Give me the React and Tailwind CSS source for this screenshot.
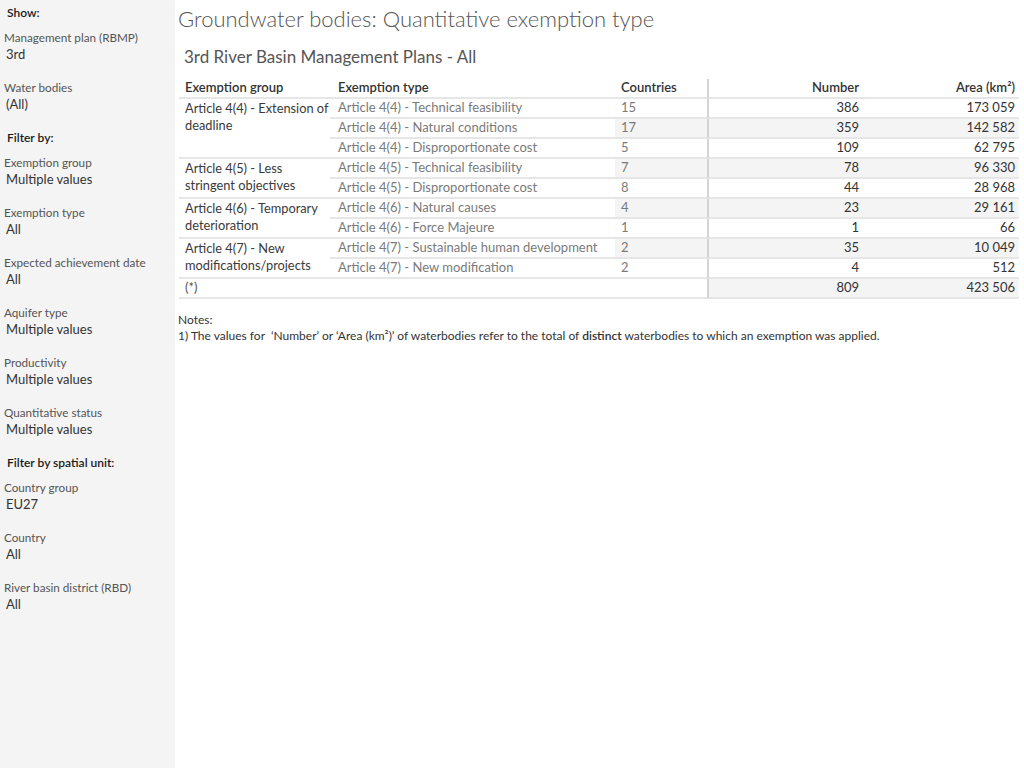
import React from "react";

const font = { fontFamily: "Lato, 'Open Sans', sans-serif" };

function SideHeader({ children }) {
  return (
    <div className="h-[25px] flex items-center pl-[7px] text-[12px] font-semibold text-[#1a1a1a]">{children}</div>
  );
}

function Filter({ label, value }) {
  return (
    <div className="h-[50px] pt-[5px]">
      <div className="h-[16px] flex items-center pl-[4px] text-[11.7px] text-[#555]">{label}</div>
      <div className="h-[17px] flex items-center pl-[6px] text-[13px] text-[#333]">{value}</div>
    </div>
  );
}

const rows = [
  { t: "Article 4(4) - Technical feasibility", c: "15", n: "386", a: "173 059" },
  { t: "Article 4(4) - Natural conditions", c: "17", n: "359", a: "142 582" },
  { t: "Article 4(4) - Disproportionate cost", c: "5", n: "109", a: "62 795" },
  { t: "Article 4(5) - Technical feasibility", c: "7", n: "78", a: "96 330" },
  { t: "Article 4(5) - Disproportionate cost", c: "8", n: "44", a: "28 968" },
  { t: "Article 4(6) - Natural causes", c: "4", n: "23", a: "29 161" },
  { t: "Article 4(6) - Force Majeure", c: "1", n: "1", a: "66" },
  { t: "Article 4(7) - Sustainable human development", c: "2", n: "35", a: "10 049" },
  { t: "Article 4(7) - New modification", c: "2", n: "4", a: "512" },
];

const groups = [
  { lines: ["Article 4(4) - Extension of", "deadline"], span: "row-span-3", start: 0 },
  { lines: ["Article 4(5) - Less", "stringent objectives"], span: "row-span-2", start: 3 },
  { lines: ["Article 4(6) - Temporary", "deterioration"], span: "row-span-2", start: 5 },
  { lines: ["Article 4(7) - New", "modifications/projects"], span: "row-span-2", start: 7 },
];

export default function App() {
  const cells = [];
  cells.push(
    <div key="h1" className="pl-[6px] flex items-center border-b-2 border-[#e6e6e6] text-[#333] font-semibold">Exemption group</div>,
    <div key="h2" className="pl-[8px] flex items-center border-b-2 border-[#e6e6e6] text-[#333] font-semibold">Exemption type</div>,
    <div key="h3" className="pl-[6px] flex items-center border-b-2 border-[#e6e6e6] text-[#333] font-semibold">Countries</div>,
    <div key="h4" className="pr-[4px] flex items-center justify-end border-b-2 border-l-2 border-[#e6e6e6] border-l-[#d4d4d4] text-[#333] font-semibold">Number</div>,
    <div key="h5" className="pr-[4px] flex items-center justify-end border-b-2 border-[#e6e6e6] text-[#333] font-semibold">Area (km²)</div>
  );
  rows.forEach((r, i) => {
    const g = groups.find((x) => x.start === i);
    if (g) {
      cells.push(
        <div key={"g" + i} className={`${g.span} pl-[6px] pt-[1px] border-b-2 border-[#e6e6e6] text-[12.8px] text-[#3a3a3a] leading-[17px] whitespace-nowrap`}>
          {g.lines.map((l) => (
            <div key={l}>{l}</div>
          ))}
        </div>
      );
    }
    const band = i % 2 === 1 ? "bg-[#f4f4f4]" : "bg-white";
    cells.push(
      <div key={"t" + i} className="pl-[8px] flex items-center border-b-2 border-[#e6e6e6] text-[#7a7a7a] whitespace-nowrap">{r.t}</div>,
      <div key={"c" + i} className={`${band} pl-[6px] flex items-center border-b-2 border-[#e6e6e6] text-[#7a7a7a]`}>{r.c}</div>,
      <div key={"n" + i} className={`${band} pr-[4px] flex items-center justify-end border-b-2 border-l-2 border-[#e6e6e6] border-l-[#d4d4d4] text-[#333]`}>{r.n}</div>,
      <div key={"a" + i} className={`${band} pr-[4px] flex items-center justify-end border-b-2 border-[#e6e6e6] text-[#333]`}>{r.a}</div>
    );
  });
  cells.push(
    <div key="f1" className="col-span-3 pl-[6px] flex items-center border-b-2 border-[#e6e6e6] text-[#555]">(*)</div>,
    <div key="f2" className="bg-[#f4f4f4] pr-[4px] flex items-center justify-end border-b-2 border-l-2 border-[#e6e6e6] border-l-[#d4d4d4] text-[#333]">809</div>,
    <div key="f3" className="bg-[#f4f4f4] pr-[4px] flex items-center justify-end border-b-2 border-[#e6e6e6] text-[#333]">423 506</div>
  );

  return (
    <div className="flex w-[1024px] h-[768px] bg-white overflow-hidden" style={font}>
      <aside className="w-[175px] shrink-0 bg-[#f4f4f4]">
        <SideHeader>Show:</SideHeader>
        <Filter label="Management plan (RBMP)" value="3rd" />
        <Filter label="Water bodies" value="(All)" />
        <SideHeader>Filter by:</SideHeader>
        <Filter label="Exemption group" value="Multiple values" />
        <Filter label="Exemption type" value="All" />
        <Filter label="Expected achievement date" value="All" />
        <Filter label="Aquifer type" value="Multiple values" />
        <Filter label="Productivity" value="Multiple values" />
        <Filter label="Quantitative status" value="Multiple values" />
        <SideHeader>Filter by spatial unit:</SideHeader>
        <Filter label="Country group" value="EU27" />
        <Filter label="Country" value="All" />
        <Filter label="River basin district (RBD)" value="All" />
      </aside>
      <main className="flex-1 pl-[3px]">
        <h1 className="h-[37px] flex items-center text-[22px] font-light text-[#555]">
          Groundwater bodies: Quantitative exemption type
        </h1>
        <h2 className="h-[39px] pl-[6px] flex items-center text-[17px] text-[#555]">
          3rd River Basin Management Plans - All
        </h2>
        <div className="pl-[1px] mt-[3px]">
          <div className="grid grid-cols-[151px_285px_92px_156px_156px] auto-rows-[20px] text-[13px]">
            {cells}
          </div>
        </div>
        <div className="mt-[13px] text-[12px] text-[#333] leading-[16px]">
          <div>Notes:</div>
          <div>
            1) The values for &nbsp;‘Number’ or ‘Area (km²)’ of waterbodies refer to the total of <span className="font-semibold">distinct</span> waterbodies to which an exemption was applied.
          </div>
        </div>
      </main>
    </div>
  );
}
